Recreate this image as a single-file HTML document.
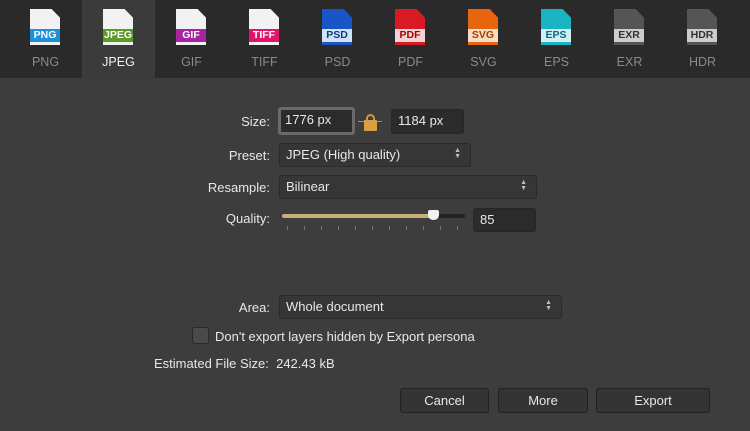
<!DOCTYPE html><html><head><style>
body{margin:0;width:750px;height:431px;background:#3d3d3d;font-family:"Liberation Sans",sans-serif;position:relative;overflow:hidden;color:#e8e8e8;font-size:13px}
.bar{position:absolute;left:0;top:0;width:750px;height:78px;background:#2a2a2a}
.tab{position:absolute;top:0;width:73px;height:78px;text-align:center}
.tab.sel{background:#3b3b3b}
.pg{position:absolute;left:21px;top:9px;width:30px;height:36px;background:#f2f2f2;clip-path:polygon(0 0,72% 0,100% 24%,100% 100%,0 100%)}
.band{position:absolute;left:0;top:20px;width:30px;height:13px;color:#fff;font-size:10.5px;font-weight:bold;line-height:13px;text-align:center}
.lab{position:absolute;left:0;width:73px;top:55px;font-size:12.5px;color:#8a8a8a}
.sel .lab{color:#f0f0f0}
.l{position:absolute;text-align:right;width:140px}
.f{position:absolute;background:#2b2b2b;border:1px solid #262626;border-radius:3px;box-sizing:border-box;padding-left:6px;line-height:22px}
.pop{background:#363636;border:1px solid #2a2a2a}
.ar{position:absolute;right:9px;top:4px;font-size:7px;line-height:6px;color:#bbb}
.b{position:absolute;top:388px;height:25px;background:#343434;border:1px solid #222;border-radius:3px;box-sizing:border-box;text-align:center;line-height:23px}
</style></head><body>
<div class="bar">
<div class="tab" style="left:9px"><div class="pg"><div class="band" style="background:#1e8fd8">PNG</div></div><div class="lab">PNG</div></div>
<div class="tab sel" style="left:82px"><div class="pg"><div class="band" style="background:#5a9a25">JPEG</div></div><div class="lab">JPEG</div></div>
<div class="tab" style="left:155px"><div class="pg"><div class="band" style="background:#a624a0">GIF</div></div><div class="lab">GIF</div></div>
<div class="tab" style="left:228px"><div class="pg"><div class="band" style="background:#e0156a">TIFF</div></div><div class="lab">TIFF</div></div>
<div class="tab" style="left:301px"><div class="pg" style="background:#1a55c8"><div class="band" style="background:#cfe3f7;color:#133a80">PSD</div></div><div class="lab">PSD</div></div>
<div class="tab" style="left:374px"><div class="pg" style="background:#d81a25"><div class="band" style="background:#f3d4d4;color:#a00">PDF</div></div><div class="lab">PDF</div></div>
<div class="tab" style="left:447px"><div class="pg" style="background:#e8650f"><div class="band" style="background:#f8dcc3;color:#a34000">SVG</div></div><div class="lab">SVG</div></div>
<div class="tab" style="left:520px"><div class="pg" style="background:#19b3c4"><div class="band" style="background:#d0f0f3;color:#0a6a76">EPS</div></div><div class="lab">EPS</div></div>
<div class="tab" style="left:593px"><div class="pg" style="background:#555"><div class="band" style="background:#ccc;color:#333">EXR</div></div><div class="lab">EXR</div></div>
<div class="tab" style="left:666px"><div class="pg" style="background:#555"><div class="band" style="background:#ccc;color:#333">HDR</div></div><div class="lab">HDR</div></div>
</div>
<div class="l" style="left:130px;top:114px">Size:</div>
<div class="f" style="left:278px;top:107px;width:77px;height:28px;border:3px solid #6a6a6a;line-height:20px;padding-left:4px">1776 px</div>
<div style="position:absolute;left:358px;top:121px;width:24px;height:1px;background:#b98a3a"></div>
<div style="position:absolute;left:366px;top:114px;width:9px;height:8px;border:2px solid #c89a45;border-bottom:none;border-radius:5px 5px 0 0;box-sizing:border-box"></div>
<div style="position:absolute;left:364px;top:120px;width:13px;height:11px;background:#d8a040;border-radius:1px"></div>
<div class="f" style="left:391px;top:109px;width:73px;height:25px">1184 px</div>
<div class="l" style="left:130px;top:148px">Preset:</div>
<div class="f pop" style="left:279px;top:143px;width:192px;height:24px">JPEG (High quality)<div class="ar">▲<br>▼</div></div>
<div class="l" style="left:130px;top:180px">Resample:</div>
<div class="f pop" style="left:279px;top:175px;width:258px;height:24px">Bilinear<div class="ar">▲<br>▼</div></div>
<div class="l" style="left:130px;top:211px">Quality:</div>
<div style="position:absolute;left:282px;top:214px;width:152px;height:4px;background:#c8b07a;border-radius:2px"></div>
<div style="position:absolute;left:434px;top:214px;width:31px;height:4px;background:#222;border-radius:2px"></div>
<div style="position:absolute;left:428px;top:210px;width:11px;height:10px;background:#f2f2f2;border-radius:2px 2px 5px 5px"></div>
<div style="position:absolute;left:287px;top:226px;width:176px;height:4px;background:repeating-linear-gradient(90deg,#777 0 1px,transparent 1px 17px)"></div>
<div class="f" style="left:473px;top:208px;width:63px;height:24px">85</div>
<div class="l" style="left:130px;top:300px">Area:</div>
<div class="f pop" style="left:279px;top:295px;width:283px;height:24px">Whole document<div class="ar">▲<br>▼</div></div>
<div style="position:absolute;left:192px;top:327px;width:17px;height:17px;background:#4a4a4a;border:1px solid #2a2a2a;border-radius:3px;box-sizing:border-box"></div>
<div style="position:absolute;left:215px;top:329px">Don't export layers hidden by Export persona</div>
<div style="position:absolute;left:154px;top:356px">Estimated File Size:&nbsp;&nbsp;242.43 kB</div>
<div class="b" style="left:400px;width:89px">Cancel</div>
<div class="b" style="left:498px;width:90px">More</div>
<div class="b" style="left:596px;width:114px">Export</div>
</body></html>
